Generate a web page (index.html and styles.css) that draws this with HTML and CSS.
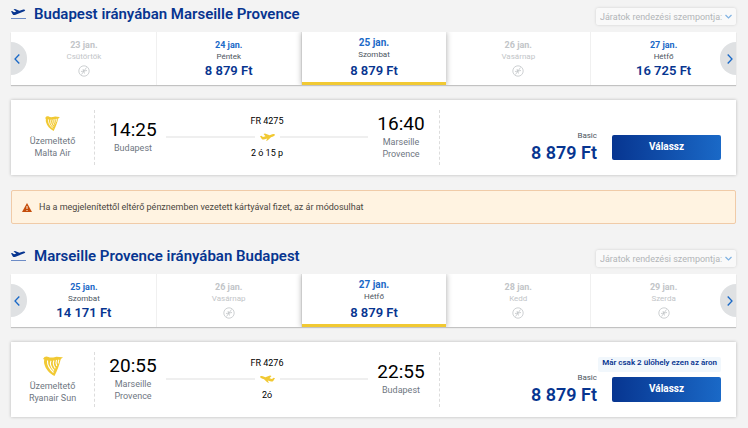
FILE: index.html
```html
<!DOCTYPE html>
<html lang="hu">
<head>
  <meta charset="utf-8">
  <meta name="viewport" content="width=device-width, initial-scale=1">
  <title>Járatok</title>
  <link rel="stylesheet" href="styles.css">
</head>
<body>
  <!-- shared icons -->
  <svg class="sprite" aria-hidden="true">
    <symbol id="takeoff" viewBox="0 0 15 11">
      <path fill="currentColor" d="M0 2.2l1.2-.3 1.9 1.3 2.2-.6L2.5.6 4 .1l4.4 1.7 3.2-1.1c1.1-.4 2.3-.3 2.5.3.2.6-.5 1.2-1.5 1.6L4 5.9c-.9.3-1.7.2-2.2-.5z"/>
      <path fill="#6d8cc6" d="M0 9h15v1H0z"/>
    </symbol>
    <symbol id="plane" viewBox="0 0 15 8">
      <path fill="currentColor" d="M0 3.2l1.300-.4 1.700 1.100 2.500-.7L3.500 1 5 .5l4.600 1.700 2.600-.9c1.200-.5 2.500-.5 2.700.2.200.7-.7 1.500-1.700 1.900L11 4.200 7.800 7.300l-1.800.6 1.300-2.500-3.400 1c-.9.200-1.600 0-2.100-.5z"/>
    </symbol>
    <symbol id="no-flight" viewBox="0 0 12 12">
      <circle cx="6" cy="6" r="5.2" fill="none" stroke="currentColor" stroke-width="0.8"/>
      <path fill="none" stroke="currentColor" stroke-width="0.8" d="M3.500 9.500L8.500 2.500M3 6.500l6-1M5 4l1.500 4.500"/>
    </symbol>
    <symbol id="harp" viewBox="0 0 20 20">
      <path fill="currentColor" d="M1.500 1C3 .2 4.300.4 5.500 1c2.500 1.200 4.500.2 7-.1 2.500-.3 4.500.5 7.500.3-1.300 1-2 1.300-2.500 2.800-1.200 5.500-3.300 10.500-6 16C6.500 17.500 2.500 13 1.300 8 .9 6 1 4.800 1.300 3.500L0 3z"/>
      <path fill="none" stroke="#fff" stroke-width="1.100" d="M4.500 4.500C4.200 9 6.500 13 10.500 16.500M8 4.700c-1.500 3 .2 6.800 3 9.800M11 4.500c-1.500 2.800-.2 5.800 1.300 7.800M13.500 4c-1 2.400-.5 4.400.3 6M15.800 3.700c-.6 1.600-.6 2.800-.5 3.800"/>
    </symbol>
    <symbol id="chevron" viewBox="0 0 6 10">
      <path fill="none" stroke="currentColor" stroke-width="1.300" d="M5.300.5L1 5l4.300 4.500"/>
    </symbol>
    <symbol id="chevron-down" viewBox="0 0 7 5">
      <path fill="none" stroke="currentColor" stroke-width="1.200" d="M.5 1l3 3 3-3"/>
    </symbol>
  </svg>

  <main class="page">
    <section class="journey">
      <header class="journey-header">
        <h2><svg class="title-icon"><use href="#takeoff"/></svg>Budapest irányában Marseille Provence</h2>
        <div class="sort">
          <select aria-label="Járatok rendezési szempontja" disabled>
            <option>Járatok rendezési szempontja:</option>
          </select>
          <svg class="sort-icon"><use href="#chevron-down"/></svg>
        </div>
      </header>

      <div class="carousel">
        <button class="day" type="button" disabled>
          <span class="date">23 jan.</span>
          <span class="weekday">Csütörtök</span>
          <svg class="none"><use href="#no-flight"/></svg>
        </button>
        <button class="day" type="button">
          <span class="date">24 jan.</span>
          <span class="weekday">Péntek</span>
          <span class="fare">8 879 Ft</span>
        </button>
        <button class="day selected" type="button">
          <span class="date">25 jan.</span>
          <span class="weekday">Szombat</span>
          <span class="fare">8 879 Ft</span>
        </button>
        <button class="day" type="button" disabled>
          <span class="date">26 jan.</span>
          <span class="weekday">Vasárnap</span>
          <svg class="none"><use href="#no-flight"/></svg>
        </button>
        <button class="day" type="button">
          <span class="date">27 jan.</span>
          <span class="weekday">Hétfő</span>
          <span class="fare">16 725 Ft</span>
        </button>
        <button class="arrow prev" type="button" aria-label="Előző"><svg><use href="#chevron"/></svg></button>
        <button class="arrow next" type="button" aria-label="Következő"><svg><use href="#chevron"/></svg></button>
      </div>

      <article class="flight">
        <div class="operator">
          <svg class="harp small"><use href="#harp"/></svg>
          <span>Üzemeltető</span>
          <span>Malta Air</span>
        </div>
        <div class="route">
          <div class="stop">
            <span class="time">14:25</span>
            <span class="city">Budapest</span>
          </div>
          <div class="leg">
            <span>FR 4275</span>
            <div class="line"><svg><use href="#plane"/></svg></div>
            <span>2 ó 15 p</span>
          </div>
          <div class="stop">
            <span class="time">16:40</span>
            <span class="city">Marseille Provence</span>
          </div>
        </div>
        <div class="buy">
          <div class="price">
            <span class="plan">Basic</span>
            <span class="amount">8 879 Ft</span>
          </div>
          <div class="action">
            <button class="select" type="button">Válassz</button>
          </div>
        </div>
      </article>
    </section>

    <div class="alert">
      <svg viewBox="0 0 10 9"><path fill="#c54d0b" d="M5 0l5 9H0z"/><path fill="#fff3e1" d="M4.500 3h1v3h-1zM4.500 7h1v1h-1z"/></svg>
      <span>Ha a megjelenítettől eltérő pénznemben vezetett kártyával fizet, az ár módosulhat</span>
    </div>

    <section class="journey">
      <header class="journey-header">
        <h2><svg class="title-icon"><use href="#takeoff"/></svg>Marseille Provence irányában Budapest</h2>
        <div class="sort">
          <select aria-label="Járatok rendezési szempontja" disabled>
            <option>Járatok rendezési szempontja:</option>
          </select>
          <svg class="sort-icon"><use href="#chevron-down"/></svg>
        </div>
      </header>

      <div class="carousel">
        <button class="day" type="button">
          <span class="date">25 jan.</span>
          <span class="weekday">Szombat</span>
          <span class="fare">14 171 Ft</span>
        </button>
        <button class="day" type="button" disabled>
          <span class="date">26 jan.</span>
          <span class="weekday">Vasárnap</span>
          <svg class="none"><use href="#no-flight"/></svg>
        </button>
        <button class="day selected" type="button">
          <span class="date">27 jan.</span>
          <span class="weekday">Hétfő</span>
          <span class="fare">8 879 Ft</span>
        </button>
        <button class="day" type="button" disabled>
          <span class="date">28 jan.</span>
          <span class="weekday">Kedd</span>
          <svg class="none"><use href="#no-flight"/></svg>
        </button>
        <button class="day" type="button" disabled>
          <span class="date">29 jan.</span>
          <span class="weekday">Szerda</span>
          <svg class="none"><use href="#no-flight"/></svg>
        </button>
        <button class="arrow prev" type="button" aria-label="Előző"><svg><use href="#chevron"/></svg></button>
        <button class="arrow next" type="button" aria-label="Következő"><svg><use href="#chevron"/></svg></button>
      </div>

      <article class="flight">
        <div class="operator">
          <svg class="harp"><use href="#harp"/></svg>
          <span>Üzemeltető</span>
          <span>Ryanair Sun</span>
        </div>
        <div class="route">
          <div class="stop">
            <span class="time">20:55</span>
            <span class="city">Marseille Provence</span>
          </div>
          <div class="leg">
            <span>FR 4276</span>
            <div class="line back"><svg><use href="#plane"/></svg></div>
            <span>2ó</span>
          </div>
          <div class="stop">
            <span class="time">22:55</span>
            <span class="city">Budapest</span>
          </div>
        </div>
        <div class="buy">
          <div class="price">
            <span class="plan">Basic</span>
            <span class="amount">8 879 Ft</span>
          </div>
          <div class="action">
            <span class="seats">Már csak 2 ülőhely ezen az áron</span>
            <button class="select" type="button">Válassz</button>
          </div>
        </div>
      </article>
    </section>
  </main>
</body>
</html>
```
FILE: styles.css
```css
* {
    box-sizing: border-box;
}
body {
    margin: 0;
    background-color: #f3f3f3;
    font-family: Roboto, Arial, sans-serif;
    font-size: 9px;
    line-height: 12px;
    color: #000;
}
button,
select {
    font-family: inherit;
    border: none;
    margin: 0;
    padding: 0;
}
button {
    cursor: pointer;
}
svg {
    display: block;
    flex: none;
}
.sprite {
    position: absolute;
    width: 0;
    height: 0;
}
.page {
    padding: 0 12px 11px 11px;
}

/* title row */
.journey-header {
    display: flex;
    justify-content: space-between;
    align-items: flex-start;
    height: 32px;
}
h2 {
    display: flex;
    align-items: center;
    gap: 8px;
    margin: 4px 0 0;
    font-size: 15px;
    line-height: 20px;
    font-weight: 600;
    color: #073590;
}
.title-icon {
    width: 15px;
    height: 11px;
}
.sort {
    display: flex;
    align-items: center;
    gap: 2px;
    height: 17px;
    margin-top: 8px;
    padding: 0 4px;
    border-radius: 2px;
    background-color: #f9f9f9;
    box-shadow: 0 0 3px rgba(0, 0, 0, 0.15);
    color: #7fb2e2;
}
.sort select {
    appearance: none;
    background: none;
    font-size: 9px;
    line-height: 12px;
    color: #b2b5b8;
    opacity: 1;
}
.sort-icon {
    width: 7px;
    height: 5px;
}

/* day picker */
.carousel {
    position: relative;
    display: grid;
    grid-template-columns: repeat(5, 1fr);
    min-height: 53px;
    padding-left: 1px;
    background-color: #fff;
    box-shadow: 0 1px 1px rgba(0, 0, 0, 0.2);
}
.day {
    display: flex;
    flex-direction: column;
    align-items: center;
    padding-top: 7px;
    background-color: #fff;
    border-right: 1px solid #f0f0f0;
    color: #073590;
}
.day:nth-child(5) {
    border-right: none;
}
.date {
    font-size: 9px;
    line-height: 12px;
    font-weight: 700;
    color: #1a69c7;
}
.weekday {
    font-size: 8px;
    line-height: 11px;
    color: #4c5560;
}
.fare {
    font-size: 13px;
    line-height: 18px;
    font-weight: 600;
}
.none {
    width: 12px;
    height: 12px;
    margin-top: 3px;
    color: #c2c5c8;
}
.day:disabled {
    cursor: default;
}
.day:disabled .date,
.day:disabled .weekday {
    color: #c2c5c8;
}
.day.selected {
    z-index: 1;
    padding-top: 5px;
    border-right: none;
    border-bottom: 3px solid #f1c933;
    box-shadow: 0 0 6px rgba(0, 0, 0, 0.35);
    clip-path: inset(0 -8px);
}
.selected .date {
    font-size: 10px;
}
.selected .fare {
    line-height: 22px;
}
.arrow {
    position: absolute;
    top: 10px;
    z-index: 2;
    display: flex;
    align-items: center;
    width: 16px;
    height: 33px;
    padding: 0 3px;
    background-color: #dfe1e3;
    color: #1a69c7;
}
.arrow svg {
    width: 6px;
    height: 10px;
}
.prev {
    left: 0;
    border-radius: 0 17px 17px 0;
}
.next {
    right: 0;
    justify-content: flex-end;
    border-radius: 17px 0 0 17px;
}
.next svg {
    transform: scaleX(-1);
}

/* flight card */
.flight {
    display: grid;
    grid-template-columns: 84px 345fr 296fr;
    min-height: 75px;
    margin-top: 15px;
    padding: 10px 0;
    background-color: #fff;
    box-shadow: 0 0 3px rgba(0, 0, 0, 0.25);
}
.operator {
    display: flex;
    flex-direction: column;
    align-items: center;
    justify-content: center;
    border-right: 1px dashed #dcdcdc;
    color: #6f7782;
}
.harp {
    width: 20px;
    height: 20px;
    margin-bottom: 4px;
    color: #f1c933;
}
.harp.small {
    width: 15px;
    height: 15px;
}
.route {
    display: flex;
    align-items: center;
    justify-content: space-between;
    padding: 0 10px;
    border-right: 1px dashed #dcdcdc;
}
.stop {
    width: 56px;
    padding-bottom: 4px;
    text-align: center;
}
.time {
    display: block;
    font-size: 19px;
    line-height: 24px;
}
.city {
    display: block;
    padding: 0 4px;
    color: #6f7782;
}
.leg {
    flex: 1;
    padding: 0 5px 2px;
    text-align: center;
}
.line {
    display: flex;
    align-items: center;
    gap: 5px;
    height: 20px;
    color: #f1c933;
}
.line::before,
.line::after {
    content: "";
    flex: 1;
    height: 2px;
    background-color: #efefef;
}
.line svg {
    width: 15px;
    height: 8px;
}
.back svg {
    transform: scaleX(-1);
}
.buy {
    display: flex;
    align-items: flex-end;
    justify-content: flex-end;
    gap: 15px;
    padding: 0 15px 5px 0;
}
.price {
    display: flex;
    flex-direction: column;
    align-items: flex-end;
}
.plan {
    font-size: 8px;
    color: #4c5560;
}
.amount {
    padding-top: 4px;
    font-size: 18px;
    line-height: 14px;
    font-weight: 600;
    color: #073590;
}
.action {
    position: relative;
    width: 109px;
}
.select {
    display: block;
    width: 100%;
    height: 25px;
    padding-bottom: 2px;
    border-radius: 2px;
    background: linear-gradient(90deg, #073590, #1a69c7);
    font-size: 10px;
    font-weight: 700;
    color: #fff;
}
.seats {
    position: absolute;
    right: 0;
    bottom: 30px;
    padding: 0 4px 3px;
    border-radius: 2px;
    background-color: #f1f7fc;
    font-size: 8px;
    font-weight: 600;
    color: #073590;
    white-space: nowrap;
}

/* currency warning */
.alert {
    display: flex;
    align-items: center;
    gap: 7px;
    min-height: 34px;
    margin: 15px 0 18px;
    padding: 0 10px;
    border: 1px solid #f0cba8;
    border-radius: 2px;
    background-color: #fff3e1;
    color: #4a4640;
}
.alert svg {
    width: 10px;
    height: 9px;
}
```
